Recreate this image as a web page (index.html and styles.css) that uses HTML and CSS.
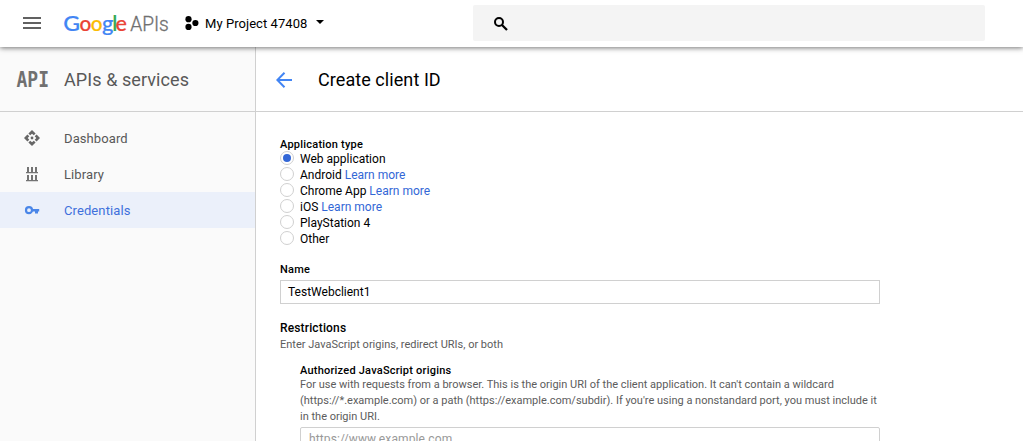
FILE: index.html
```html
<!DOCTYPE html>
<html lang="en">
<head>
<meta charset="utf-8">
<title>Create client ID</title>
<link rel="stylesheet" href="styles.css">
</head>
<body>
<header class="topbar">
  <svg class="menu-icon" width="18" height="12" viewBox="0 0 18 12"><path d="M0 0h18v2H0zM0 5h18v2H0zM0 10h18v2H0z" fill="#616161"/></svg>
  <svg class="brand" width="106" height="30" viewBox="0 0 106 30">
    <g class="brand-google">
      <text x="-0.8" y="20" fill="#4285f4" stroke="#4285f4" textLength="16.8" lengthAdjust="spacingAndGlyphs">G</text>
      <text x="15.4" y="20" fill="#ea4335" stroke="#ea4335" textLength="11.8" lengthAdjust="spacingAndGlyphs">o</text>
      <text x="26.7" y="20" fill="#fbbc05" stroke="#fbbc05" textLength="11.8" lengthAdjust="spacingAndGlyphs">o</text>
      <text x="38.1" y="20" fill="#4285f4" stroke="#4285f4" textLength="11.4" lengthAdjust="spacingAndGlyphs">g</text>
      <text x="48.3" y="20" fill="#34a853" stroke="#34a853">l</text>
      <text x="51.5" y="20" fill="#ea4335" stroke="#ea4335" textLength="11.4" lengthAdjust="spacingAndGlyphs">e</text>
    </g>
    <text class="brand-apis" x="66.2" y="20" textLength="38.6" lengthAdjust="spacingAndGlyphs">APIs</text>
  </svg>
  <svg class="project-icon" width="14" height="14" viewBox="0 0 14 14"><circle cx="3.5" cy="3.2" r="3.1"/><circle cx="3.5" cy="10.9" r="3.1"/><circle cx="10.4" cy="7" r="3.1"/></svg>
  <span class="project-name">My Project 47408</span>
  <svg class="caret" width="8" height="4" viewBox="0 0 8 4"><path d="M0 0h8L4 4z"/></svg>
  <div class="search">
    <svg width="14" height="14" viewBox="0 0 14 14" fill="none" stroke="#000"><circle cx="5" cy="5" r="4" stroke-width="2"/><path d="M8 8l5 5" stroke-width="2.3"/></svg>
  </div>
</header>
<div class="layout">
  <aside class="sidebar">
    <div class="side-head">
      <svg class="api-icon" width="32" height="30" viewBox="0 0 32 30"><text x="-0.5" y="22" textLength="32.5" lengthAdjust="spacingAndGlyphs">API</text></svg>
      <span class="side-title">APIs &amp; services</span>
    </div>
    <nav class="side-nav">
      <a class="nav-item">
        <svg width="16" height="16" viewBox="0 0 16 16" fill="#666"><path d="M8 0l3.6 3.4-1.8 1.9L8 3.7 6.2 5.3 4.4 3.4zM8 16l3.6-3.4-1.8-1.9L8 12.3l-1.8-1.6-1.8 1.9zM0 8l3.4-3.6 1.9 1.8L3.7 8l1.6 1.8-1.9 1.8zM16 8l-3.4-3.6-1.9 1.8L12.3 8l-1.6 1.8 1.9 1.8z"/><circle cx="8" cy="8" r="1.4"/></svg>
        <span>Dashboard</span>
      </a>
      <a class="nav-item">
        <svg width="16" height="16" viewBox="0 0 16 16" fill="#737373"><path d="M3 1h2v5h2V1h2v5h2V1h2v5h1v1.3H2V6h1zM3 9h2v5h2V9h2v5h2V9h2v5h1v1.3H2V14h1z"/></svg>
        <span>Library</span>
      </a>
      <a class="nav-item nav-active">
        <svg width="16" height="16" viewBox="0 0 16 16"><circle cx="5" cy="8.2" r="3" fill="none" stroke="#4a86e8" stroke-width="2.2"/><path d="M8 7h7.2v2.4H14v2.1h-3V9.400H8z" fill="#4a86e8"/></svg>
        <span>Credentials</span>
      </a>
    </nav>
  </aside>
  <main class="main">
    <div class="main-head">
      <svg width="16" height="16" viewBox="0 0 16 16" fill="none" stroke="#4285f4" stroke-width="2"><path d="M16 8H1.5M8.5 .8L1.3 8l7.2 7.2"/></svg>
      <h1 class="main-title">Create client ID</h1>
    </div>
    <form class="form">
      <div class="label type-label">Application type</div>
      <div class="option"><i class="radio radio-on"></i><span>Web application</span></div>
      <div class="option"><i class="radio"></i><span>Android <a>Learn more</a></span></div>
      <div class="option"><i class="radio"></i><span>Chrome App <a>Learn more</a></span></div>
      <div class="option"><i class="radio"></i><span>iOS <a>Learn more</a></span></div>
      <div class="option"><i class="radio"></i><span>PlayStation 4</span></div>
      <div class="option"><i class="radio"></i><span>Other</span></div>
      <div class="label name-label">Name</div>
      <div class="field">TestWebclient1</div>
      <div class="section-title">Restrictions</div>
      <div class="help">Enter JavaScript origins, redirect URIs, or both</div>
      <div class="origins">
        <div class="label origins-label">Authorized JavaScript origins</div>
        <div class="help">For use with requests from a browser. This is the origin URI of the client application. It can't contain a wildcard<br>(https://*.example.com) or a path (https://example.com/subdir). If you're using a nonstandard port, you must include it<br>in the origin URI.</div>
        <div class="field origin-field">https://www.example.com</div>
      </div>
    </form>
  </main>
</div>
</body>
</html>
```
FILE: styles.css
```css
* { box-sizing: border-box; }
body {
  margin: 0;
  height: 441px;
  overflow: hidden;
  background: #fff;
  color: #000;
  font: 12px/16px Roboto, sans-serif;
}
svg { display: block; flex: none; }
.topbar {
  position: relative;
  z-index: 1;
  display: flex;
  align-items: center;
  height: 47px;
  padding: 0 38px 1px 23px;
  background: #fff;
  box-shadow: 0 1px 5px rgba(0, 0, 0, .55);
}
.menu-icon { margin-right: 23px; }
.brand { margin: 5px 15px 0 0; overflow: visible; }
.brand-google { font: 500 21.5px Lato, sans-serif; stroke-width: .2px; }
.brand-apis { font: 300 21px Roboto, sans-serif; fill: #707070; stroke: #707070; stroke-width: .35px; }
.project-icon { margin-right: 6px; }
.project-name { width: 104px; padding-top: 1px; font-size: 13px; letter-spacing: .06px; white-space: nowrap; }
.caret { margin: -3px 0 0 7px; }
.search {
  display: flex;
  align-items: center;
  width: 512px;
  height: 36px;
  margin-left: auto;
  padding: 2px 0 0 21px;
  border-radius: 2px;
  background: #f4f4f4;
}
.layout { display: flex; height: 394px; }
.sidebar {
  flex: none;
  width: 256px;
  border-right: 1px solid #d0d0d0;
  background: #fafafa;
  color: #585858;
}
.side-head, .main-head {
  display: flex;
  align-items: center;
  height: 65px;
  padding-top: 2px;
  border-bottom: 1px solid #d0d0d0;
}
.side-head { padding-left: 17px; }
.api-icon { margin-right: 15px; overflow: visible; }
.api-icon text { font: bold 20.5px "DejaVu Sans Mono", monospace; fill: #707070; }
.side-title { font-size: 18px; letter-spacing: .08px; }
.side-nav { padding-top: 8px; }
.nav-item {
  display: flex;
  align-items: center;
  gap: 24px;
  height: 36px;
  padding: 1px 0 0 24px;
  font-size: 13px;
  letter-spacing: .1px;
}
.nav-item svg { margin-top: -1px; }
.nav-active { background: #ebf0fa; color: #3f70dc; }
.main { flex: 1; }
.main-head { padding-left: 20px; gap: 26px; }
.main-title { margin: 0; font-size: 18px; font-weight: 400; letter-spacing: .07px; }
.form { padding: 25px 0 0 24px; }
.label { font-size: 11px; font-weight: 500; letter-spacing: .22px; }
.type-label { height: 14px; }
.option { display: flex; align-items: flex-start; gap: 6px; height: 16px; }
.option a { color: #3367d6; }
.radio {
  display: flex;
  flex: none;
  align-items: center;
  justify-content: center;
  width: 14px;
  height: 14px;
  border: 1px solid #d0d0d0;
  border-radius: 50%;
}
.radio-on::after {
  content: "";
  width: 8px;
  height: 8px;
  border-radius: 50%;
  background: #3367d6;
}
.name-label { margin-top: 15px; }
.field {
  width: 600px;
  height: 24px;
  margin-top: 2px;
  padding: 3px 7px;
  border: 1px solid #d0d0d0;
}
.section-title { height: 17px; margin-top: 16px; font-weight: 500; letter-spacing: .15px; }
.help { color: #5c5c5c; font-size: 11px; }
.origins { padding: 10px 0 0 20px; }
.origins-label { height: 14px; }
.origin-field { width: 580px; padding: 3px 8px; letter-spacing: .12px; color: #999; border-radius: 2px; }
```
